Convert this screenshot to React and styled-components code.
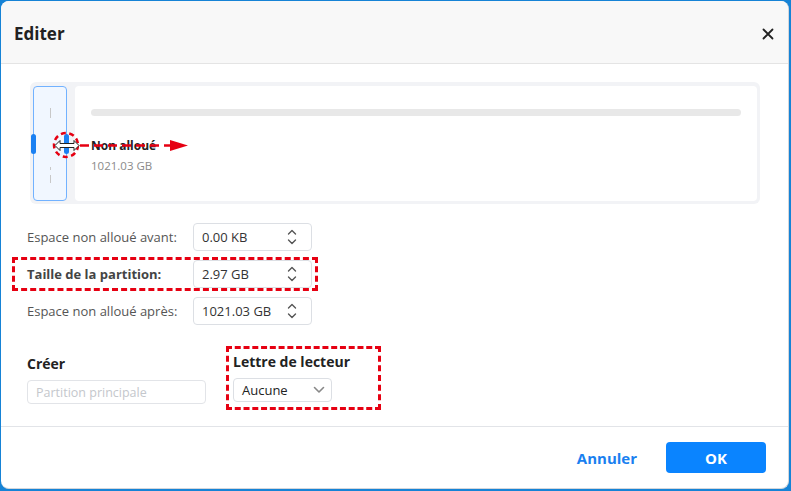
import styled, { createGlobalStyle } from "styled-components";

const GlobalStyle = createGlobalStyle`
  html, body {
    margin: 0;
    padding: 0;
    background: #1683d6;
    font-family: "Open Sans", "Noto Sans", "Liberation Sans", sans-serif;
  }
`;

const Dialog = styled.div`
  margin: 1px 0 0 1px;
  width: 788px;
  height: 488px;
  background: #fff;
  border-radius: 8px;
  border-right: 1px solid #d3d6db;
  border-bottom: 1px solid #d3d6db;
  box-sizing: border-box;
  overflow: hidden;
  display: flex;
  flex-direction: column;
`;

const Header = styled.div`
  height: 63px;
  flex: none;
  background: #f8f8f8;
  border-bottom: 1px solid #e4e4e4;
  display: flex;
  align-items: center;
  justify-content: space-between;
  padding: 3px 10px 0 13px;
  box-sizing: border-box;
`;

const Title = styled.h1`
  margin: 0;
  font-size: 17px;
  font-weight: 700;
  color: #222;
`;

const CloseButton = styled.button`
  border: 0;
  background: none;
  padding: 0;
  width: 20px;
  height: 20px;
  display: flex;
  align-items: center;
  justify-content: center;
  cursor: pointer;
`;

const Body = styled.div`
  flex: 1;
  min-height: 0;
  padding: 18px 28px 0 29px;
`;

const DiskArea = styled.div`
  position: relative;
  height: 122px;
  background: #f2f3f6;
  border-radius: 6px;
  padding: 4px 3px 3px 3px;
  box-sizing: border-box;
  display: flex;
  gap: 8px;
`;

const SmallPart = styled.div`
  width: 34px;
  box-sizing: border-box;
  border: 1.5px solid #72b2ff;
  background: #f1f7ff;
  border-radius: 4px;
  position: relative;
`;

const Tick = styled.div`
  position: absolute;
  left: 16px;
  width: 1px;
  background: #c8c8c8;
  top: ${(p) => p.$top}px;
  height: ${(p) => p.$h}px;
`;

const PartCard = styled.div`
  flex: 1;
  background: #fff;
  border-radius: 4px;
  padding: 23px 16px 0 16px;
`;

const Bar = styled.div`
  height: 7px;
  border-radius: 4px;
  background: #e8e8e8;
`;

const PartName = styled.div`
  margin-top: 21px;
  font-size: 12px;
  font-weight: 700;
  color: #222;
`;

const PartSize = styled.div`
  margin-top: 4px;
  font-size: 11.5px;
  color: #8a8a8a;
`;

const Handle = styled.div`
  position: absolute;
  top: 52px;
  left: ${(p) => p.$left}px;
  width: 5px;
  height: 20px;
  border-radius: 3px;
  background: #1a80f2;
`;

const Annotation = styled.svg`
  position: absolute;
  left: 20px;
  top: 50px;
  overflow: visible;
`;

const Form = styled.div`
  margin-top: 19px;
  display: flex;
  flex-direction: column;
  gap: 9px;
  margin-left: -3px;
`;

const Row = styled.div`
  display: grid;
  grid-template-columns: 166px 119px;
  align-items: center;
  width: fit-content;
  ${(p) =>
    p.$marked
      ? `
    outline: 3px dashed #e60012;
    margin-left: -12px;
    padding-left: 12px;
    padding-right: 3px;
  `
      : ""}
`;

const Label = styled.label`
  font-size: 13px;
  color: ${(p) => (p.$bold ? "#444" : "#555")};
  font-weight: ${(p) => (p.$bold ? 700 : 400)};
`;

const SpinBox = styled.div`
  height: 28px;
  border: 1px solid #dcdfe4;
  border-radius: 4px;
  box-sizing: border-box;
  display: flex;
  align-items: center;
  padding: 0 14px 0 8px;
  background: #fff;
`;

const SpinValue = styled.span`
  flex: 1;
  width: 0;
  margin-right: 10px;
  font-size: 13px;
  color: #333;
  white-space: nowrap;
  overflow: hidden;
`;

const Options = styled.div`
  margin-top: 29px;
  display: flex;
  gap: 23px;
  margin-left: -3px;
`;

const OptionGroup = styled.div`
  display: flex;
  flex-direction: column;
  gap: 7px;
  ${(p) =>
    p.$marked
      ? `
    outline: 3px dashed #e60012;
    padding: 3px 28px 5px 4px;
    margin-top: -5px;
  `
      : ""}
`;

const GroupTitle = styled.div`
  font-size: 14px;
  font-weight: 700;
  color: #222;
`;

const TextField = styled.div`
  width: 179px;
  height: 24px;
  box-sizing: border-box;
  border: 1px solid #e2e4e8;
  border-radius: 4px;
  font-size: 12.5px;
  color: #c4c7cc;
  display: flex;
  align-items: center;
  padding-left: 8px;
`;

const Select = styled.div`
  width: 99px;
  height: 24px;
  box-sizing: border-box;
  border: 1px solid #dcdfe4;
  border-radius: 4px;
  font-size: 13px;
  color: #222;
  display: flex;
  align-items: center;
  justify-content: space-between;
  padding: 0 6px 0 8px;
`;

const Footer = styled.div`
  height: 62px;
  flex: none;
  border-top: 1px solid #e2e4e8;
  box-sizing: border-box;
  display: flex;
  align-items: center;
  justify-content: flex-end;
  gap: 29px;
  padding: 0 22px 0 0;
`;

const TextButton = styled.button`
  border: 0;
  background: none;
  color: #1a7ff0;
  font-family: inherit;
  font-size: 15px;
  font-weight: 700;
  padding: 0;
  cursor: pointer;
`;

const PrimaryButton = styled.button`
  width: 100px;
  height: 31px;
  border: 0;
  border-radius: 4px;
  background: #0a84ff;
  color: #fff;
  font-family: inherit;
  font-size: 15px;
  font-weight: 700;
  cursor: pointer;
`;

const Spinner = () => (
  <svg width="10" height="18" viewBox="0 0 10 18" fill="none" stroke="#555" strokeWidth="1.4" strokeLinecap="round" strokeLinejoin="round">
    <path d="M1.5 6 5 2.5 8.5 6" />
    <path d="M1.5 12 5 15.5 8.5 12" />
  </svg>
);

const fields = [
  { label: "Espace non alloué avant:", value: "0.00 KB" },
  { label: "Taille de la partition:", value: "2.97 GB", marked: true },
  { label: "Espace non alloué après:", value: "1021.03 GB" },
];

export default function App() {
  return (
    <>
      <GlobalStyle />
      <Dialog>
        <Header>
          <Title>Editer</Title>
          <CloseButton>
            <svg width="12" height="12" viewBox="0 0 12 12" stroke="#222" strokeWidth="1.8" strokeLinecap="round">
              <path d="M1.5 1.5l9 9M10.5 1.5l-9 9" />
            </svg>
          </CloseButton>
        </Header>
        <Body>
          <DiskArea>
            <SmallPart>
              <Tick $top={21} $h={10} />
              <Tick $top={80} $h={3} />
              <Tick $top={88} $h={8} />
            </SmallPart>
            <PartCard>
              <Bar />
              <PartName>Non alloué</PartName>
              <PartSize>1021.03 GB</PartSize>
            </PartCard>
            <Handle $left={1} />
            <Handle $left={34} />
            <Annotation width="170" height="30" viewBox="0 0 170 30">
              <circle cx="16" cy="13" r="12" fill="none" stroke="#e60012" strokeWidth="2.5" strokeDasharray="5 3.5" />
              <path d="M30 13.5 H120" stroke="#e60012" strokeWidth="2.5" strokeDasharray="9 5" />
              <path d="M120 8 L138 13.5 L120 19 Z" fill="#e60012" />
              <path
                d="M5 13.5 L10 8.5 L10 11.5 L24 11.5 L24 8.5 L29 13.5 L24 18.5 L24 15.5 L10 15.5 L10 18.5 Z"
                fill="#fff"
                stroke="#222"
                strokeWidth="1"
                strokeLinejoin="round"
              />
            </Annotation>
          </DiskArea>

          <Form>
            {fields.map((f) => (
              <Row key={f.label} $marked={f.marked}>
                <Label $bold={f.marked}>{f.label}</Label>
                <SpinBox>
                  <SpinValue>{f.value}</SpinValue>
                  <Spinner />
                </SpinBox>
              </Row>
            ))}
          </Form>

          <Options>
            <OptionGroup>
              <GroupTitle>Créer</GroupTitle>
              <TextField>Partition principale</TextField>
            </OptionGroup>
            <OptionGroup $marked>
              <GroupTitle>Lettre de lecteur</GroupTitle>
              <Select>
                Aucune
                <svg width="12" height="8" viewBox="0 0 12 8" fill="none" stroke="#888" strokeWidth="1.6" strokeLinecap="round" strokeLinejoin="round">
                  <path d="M1.5 1.5 6 6 10.5 1.5" />
                </svg>
              </Select>
            </OptionGroup>
          </Options>
        </Body>
        <Footer>
          <TextButton>Annuler</TextButton>
          <PrimaryButton>OK</PrimaryButton>
        </Footer>
      </Dialog>
    </>
  );
}
